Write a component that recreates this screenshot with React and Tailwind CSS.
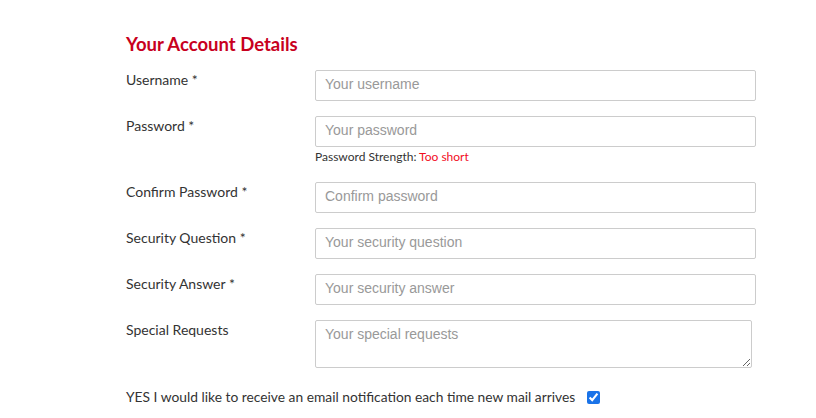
import { useState } from "react";

const fields = [
  { label: "Username *", placeholder: "Your username", type: "text" },
  { label: "Password *", placeholder: "Your password", type: "password", strength: true },
  { label: "Confirm Password *", placeholder: "Confirm password", type: "password" },
  { label: "Security Question *", placeholder: "Your security question", type: "text" },
  { label: "Security Answer *", placeholder: "Your security answer", type: "text" },
];

export default function App() {
  const [notify, setNotify] = useState(true);

  return (
    <div className="min-h-screen bg-white font-['Lato','Liberation_Sans',sans-serif] text-[#333]">
      <div className="pl-[126px] pt-[30px] w-[760px]">
        <h2 className="text-[18.5px] leading-[28px] font-bold text-[#c8001e] mb-[12px]">Your Account Details</h2>

        {fields.map((f) => (
          <div key={f.label} className="flex mb-[15px]">
            <label className="w-[189px] shrink-0 text-[14px] leading-5">{f.label}</label>
            <div className="w-[441px]">
              <input
                type={f.type}
                placeholder={f.placeholder}
                className="block w-full h-[31px] pl-[9px] pr-[10px] pb-[4px] border border-[#ccc] rounded-[2px] font-['Liberation_Sans',Arial,sans-serif] text-[14px] placeholder:text-[#999] outline-none"
              />
              {f.strength && (
                <p className="mt-[2px] h-[18px] text-[12px] leading-4">
                  Password Strength: <span className="text-[#f20d1d]">Too short</span>
                </p>
              )}
            </div>
          </div>
        ))}

        <div className="flex">
          <label className="w-[189px] shrink-0 text-[14px] leading-5">Special Requests</label>
          <textarea
            placeholder="Your special requests"
            className="block w-[437px] h-[48px] pl-[9px] pr-[10px] pt-[3px] pb-[5px] border border-[#ccc] rounded-[2px] font-['Liberation_Sans',Arial,sans-serif] text-[14px] placeholder:text-[#999] outline-none"
          />
        </div>

        <div className="flex items-center mt-[19px] text-[13.8px] leading-5">
          <span>YES I would like to receive an email notification each time new mail arrives</span>
          <input
            type="checkbox"
            checked={notify}
            onChange={(e) => setNotify(e.target.checked)}
            className="ml-[12px] w-[13px] h-[13px] accent-[#1a73e8]"
          />
        </div>
      </div>
    </div>
  );
}
